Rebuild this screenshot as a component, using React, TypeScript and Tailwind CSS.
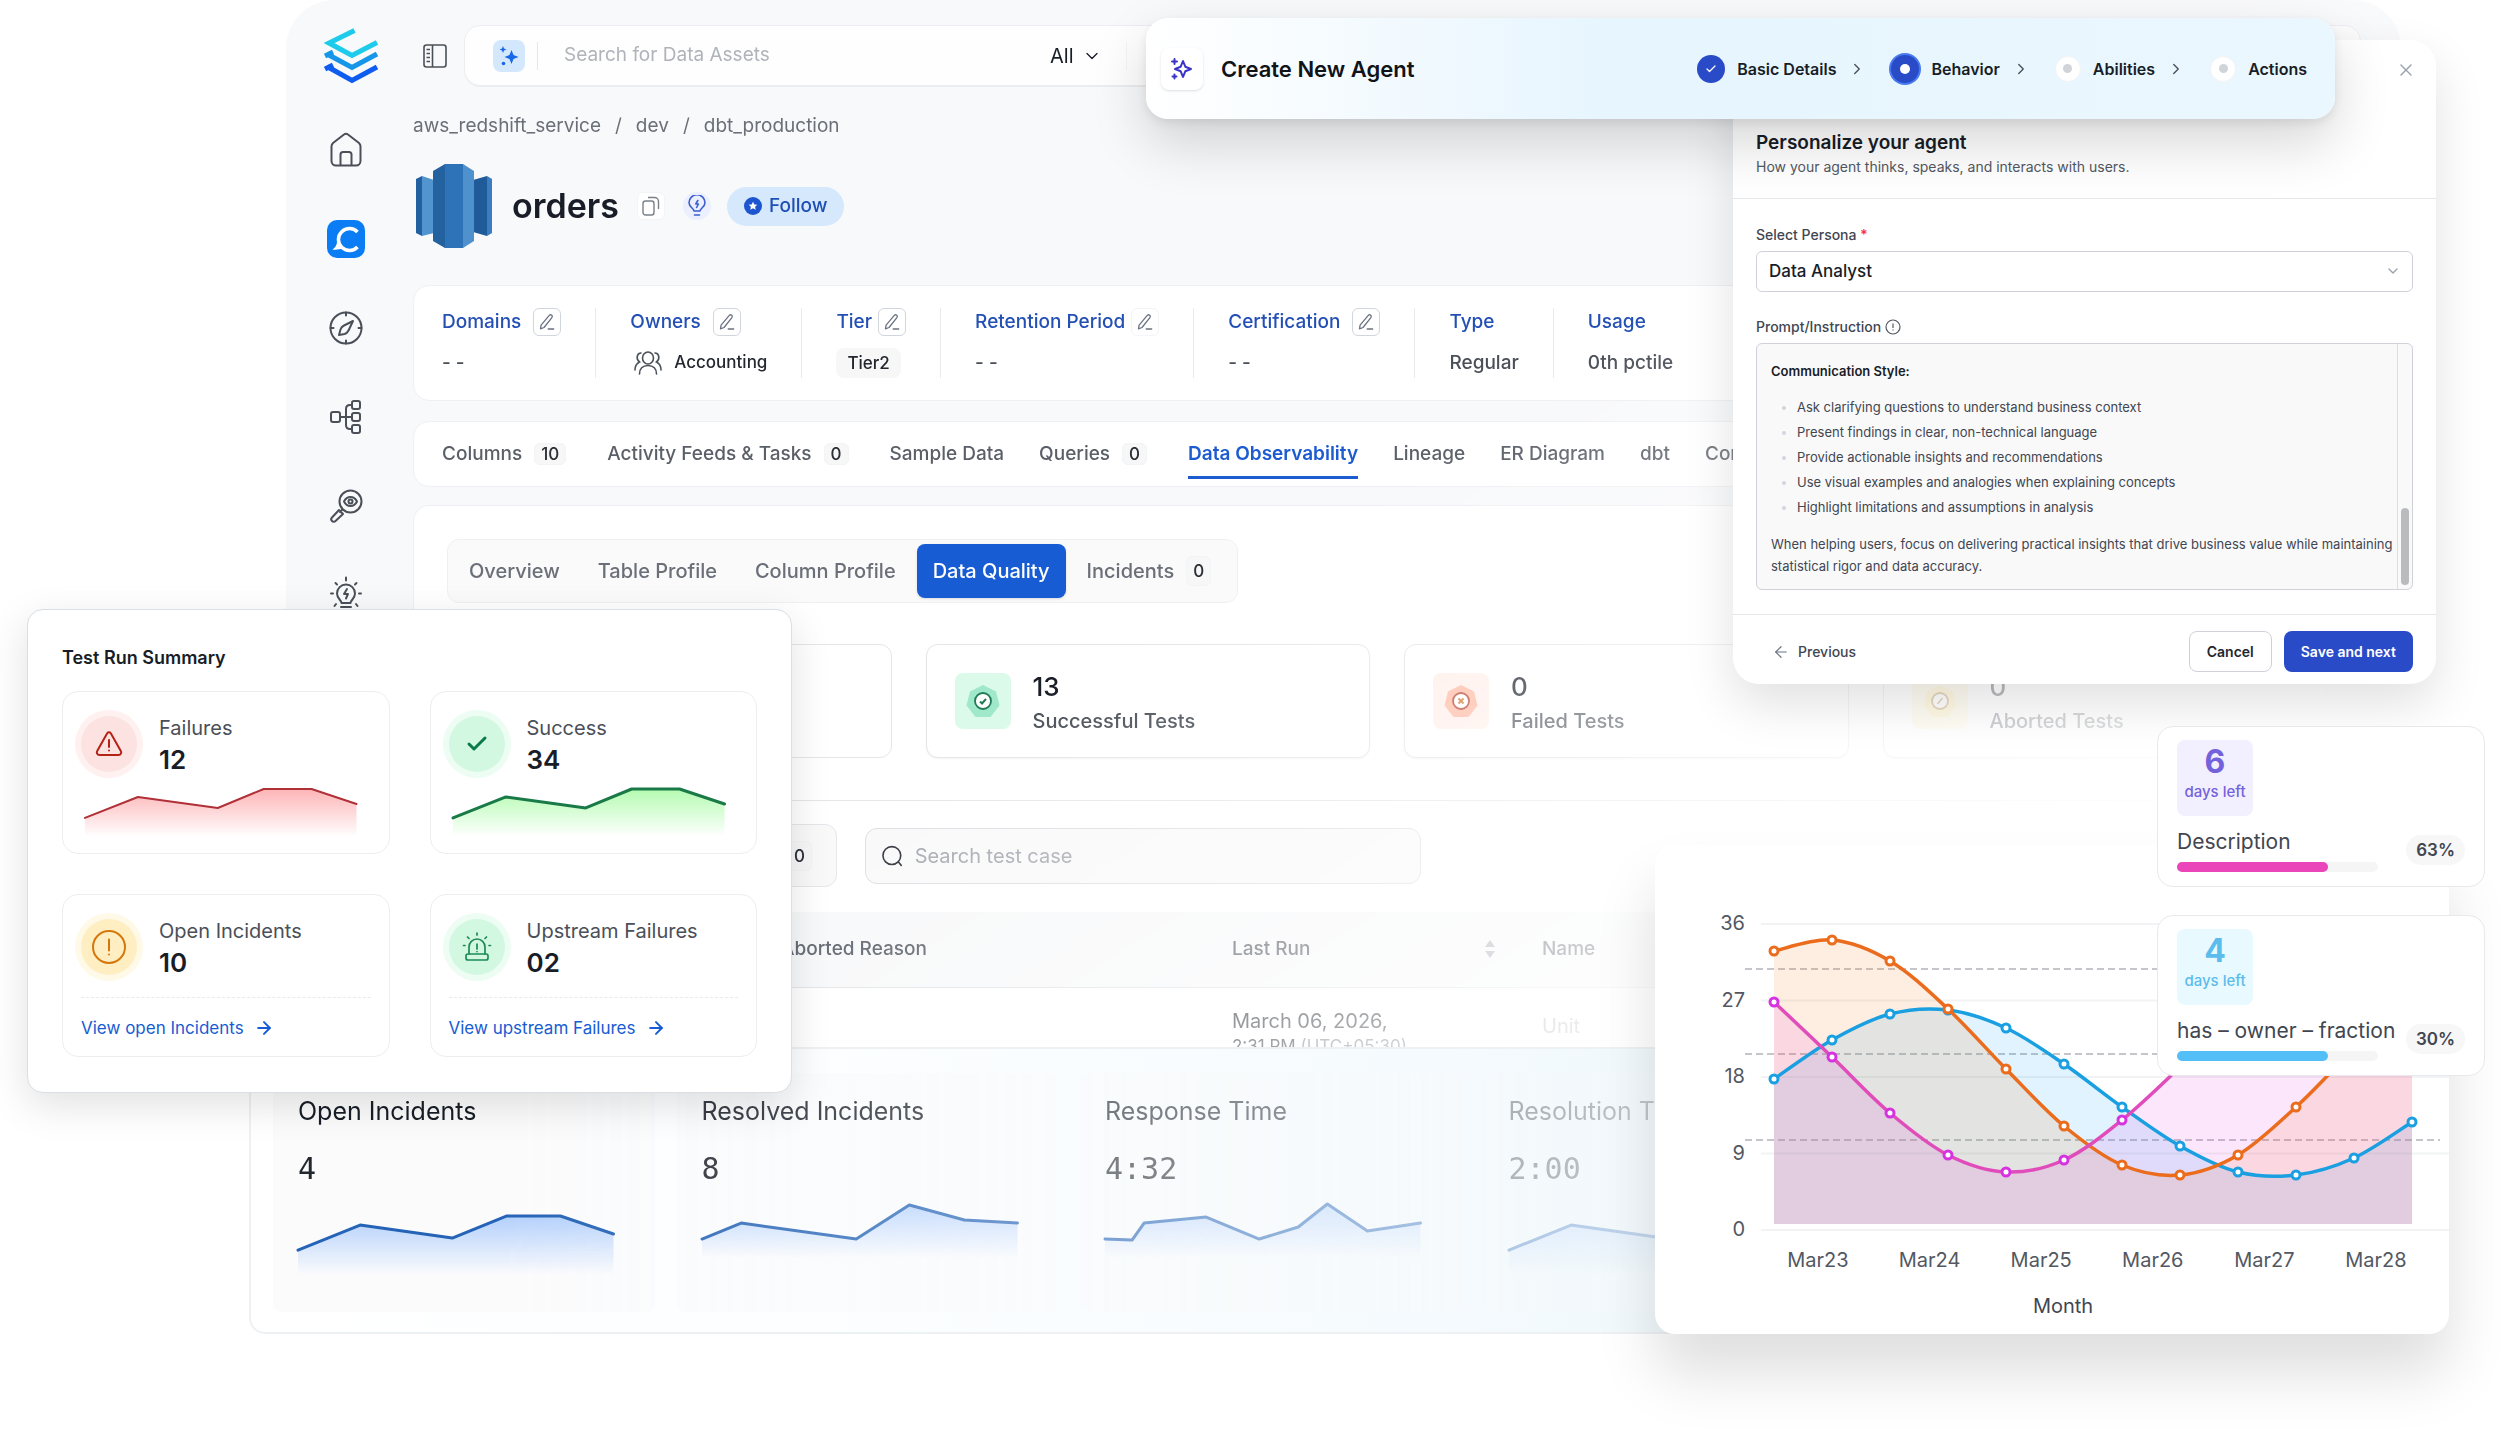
import React from "react";
import { ArrowLeft, ArrowRight, Check, ChevronDown, ChevronRight, X } from "lucide-react";

type Point = [number, number];

const linePath = (points: Point[]) =>
  points.map(([x, y], i) => `${i ? "L" : "M"}${x} ${y}`).join(" ");

// Catmull-Rom spline turned into cubic beziers
const curvePath = (points: Point[]) => {
  let d = `M${points[0][0]} ${points[0][1]}`;
  for (let i = 0; i < points.length - 1; i++) {
    const p0 = points[i - 1] || points[i];
    const p1 = points[i];
    const p2 = points[i + 1];
    const p3 = points[i + 2] || p2;
    d += ` C${p1[0] + (p2[0] - p0[0]) / 6} ${p1[1] + (p2[1] - p0[1]) / 6} ${p2[0] - (p3[0] - p1[0]) / 6} ${p2[1] - (p3[1] - p1[1]) / 6} ${p2[0]} ${p2[1]}`;
  }
  return d;
};

/* ---------- icons ---------- */

const Logo = () => (
  <svg width="56" height="56" viewBox="0 0 56 56" fill="none" strokeWidth="5">
    <path d="M1 41l8-4M3 38.500l25 14 25-13.500" stroke="#0f5cf0" />
    <path d="M1 28l8-4M3 26l25 13.500L53 26" stroke="#1596e8" />
    <path d="M30.500 2.500L5 15l23 12.500L53 14.500" stroke="#1dcbea" />
  </svg>
);

const HomeIcon = () => (
  <svg width="38" height="38" viewBox="0 0 38 38" fill="none" stroke="#4a4f58" strokeWidth="2" strokeLinejoin="round">
    <path d="M4.500 15.500C4.500 14 5 13 6 12L17 3.500c1.200-1 2.800-1 4 0L32 12c1 1 1.500 2 1.500 3.500V30a4.500 4.500 0 0 1-4.500 4.500H9A4.500 4.500 0 0 1 4.500 30z" />
    <path d="M13.500 34V23.500c0-1.500 1-2.500 2.500-2.500h6c1.500 0 2.500 1 2.500 2.500V34" />
  </svg>
);

const ChatLogo = () => (
  <svg width="38" height="38" viewBox="0 0 38 38" fill="none">
    <rect width="38" height="38" rx="10" fill="#0a7df5" />
    <path d="M30.500 12A11 11 0 1 0 30.500 27" stroke="#fff" strokeWidth="3.500" />
    <path d="M10 22c0 3-2 6-4.500 7.500 3.500.5 7 0 10-1z" fill="#fff" />
  </svg>
);

const CompassIcon = () => (
  <svg width="38" height="38" viewBox="0 0 38 38" fill="none" stroke="#4a4f58" strokeWidth="2" strokeLinecap="round" strokeLinejoin="round">
    <circle cx="19" cy="19" r="15.500" />
    <path d="M19 3.500v3M19 31.500v3M3.500 19h3M31.500 19h3" />
    <path d="M26 12l-4.500 9.500c-1 2-2 3-4 3.500L12 26l1.500-5.500c.5-2 1.500-3 3.500-4z" />
  </svg>
);

const LineageIcon = () => (
  <svg width="38" height="38" viewBox="0 0 38 38" fill="none" stroke="#4a4f58" strokeWidth="2">
    <rect x="4" y="14" width="9" height="10" rx="2" />
    <rect x="25" y="3" width="8" height="8" rx="2" />
    <rect x="25" y="15" width="8" height="8" rx="2" />
    <rect x="25" y="27" width="8" height="8" rx="2" />
    <path d="M13 19h12M19 19v-8c0-2.500 1.500-4 4-4h2M19 19v8c0 2.500 1.500 4 4 4h2" />
  </svg>
);

const ObserveIcon = () => (
  <svg width="38" height="38" viewBox="0 0 38 38" fill="none" stroke="#4a4f58" strokeWidth="2" strokeLinecap="round" strokeLinejoin="round">
    <circle cx="23.500" cy="14.500" r="11" />
    <path d="M17 14.500c3-6 10-6 13 0-3 6-10 6-13 0z" />
    <circle cx="23.500" cy="14.500" r="2" />
    <path d="M15.500 22.500L13 25M12 23l4 4-7.500 7c-1 1-2.500 1-3.500 0s-1-2.500 0-3.500z" />
  </svg>
);

const InsightIcon = () => (
  <svg width="38" height="38" viewBox="0 0 38 38" fill="none" stroke="#4a4f58" strokeWidth="2" strokeLinecap="round" strokeLinejoin="round">
    <path d="M14.500 27c0-3-4.500-4-4.500-9.500a9 9 0 0 1 18 0c0 5.500-4.500 6.500-4.500 9.500z" />
    <path d="M14 31h10M15 34.500h8M20 13l-3 5h4l-2 4.500M19 1.500v3M4 17.500h2M32 17.500h2M8.500 7l1.500 1.500M29.500 7L28 8.500M9 28l-1.500 2M29 28l1.500 2" />
  </svg>
);

const RedshiftIcon = () => (
  <svg width="76" height="84" viewBox="0 0 76 84">
    <path d="M0 15l6-3v60l-6-3z" fill="#22609f" />
    <path d="M6 12l12 4v53L6 72z" fill="#5294cf" />
    <path d="M57 16l14-4v60l-14-4z" fill="#205b99" />
    <path d="M71 12l5 3v54l-5 3z" fill="#3b7dc0" />
    <path d="M17 7l12-7v84l-12-7z" fill="#23619f" />
    <path d="M29 0h18v84H29z" fill="#2e73b8" />
    <path d="M47 0l11 7v70l-11 7z" fill="#4f91cd" />
  </svg>
);

const PanelIcon = () => (
  <svg width="24" height="24" viewBox="0 0 24 24" fill="none" stroke="#4a4f58" strokeWidth="1.600">
    <rect x="1" y="1" width="22" height="22" rx="2.500" />
    <path d="M9.500 1v22M3.500 5.500h3.500M3.500 9.500h3.500M3.500 13.500h3.500M3.500 17.500h3.500" />
  </svg>
);

const PencilIcon = () => (
  <svg width="18" height="18" viewBox="0 0 18 18" fill="none" stroke="#6b7280" strokeWidth="1.300" strokeLinecap="round" strokeLinejoin="round">
    <path d="M11.500 2.200c.9-.9 2.300-.2 2.600.4.400.8.200 1.500-.4 2.200L6 14.500l-3.500 1.300.6-3.700zM10.200 16h5.500" />
  </svg>
);

const SparkleIcon = () => (
  <svg width="20" height="22" viewBox="0 0 20 22" fill="#1767e8">
    <path d="M12.500 5l2 5 5 2-5 2-2 5-2-5-5-2 5-2z" />
    <path d="M4 1l1 2.500L7.500 4.500 5 5.500 4 8 3 5.500.5 4.500 3 3.500z" />
    <circle cx="4.500" cy="18.500" r="1.800" />
  </svg>
);

const AgentIcon = () => (
  <svg width="24" height="24" viewBox="0 0 24 24" fill="none" stroke="#3a33c8" strokeWidth="2" strokeLinejoin="round" strokeLinecap="round">
    <path d="M13 4l2.300 5.700L21 12l-5.700 2.300L13 20l-2.300-5.700L5 12l5.700-2.300z" />
    <path d="M4.500 2v5M2 4.500h5M4.500 17.500v4M2.500 19.500h4" />
  </svg>
);

const CopyIcon = () => (
  <svg width="18" height="20" viewBox="0 0 18 20" fill="none" stroke="#7a7f88" strokeWidth="1.400">
    <rect x="1" y="5" width="11" height="14" rx="2.500" />
    <path d="M6 1.500h6.500a4 4 0 0 1 4 4V13" />
  </svg>
);

const BulbIcon = () => (
  <svg width="20" height="22" viewBox="0 0 20 22" fill="none" stroke="#3b5fd0" strokeWidth="1.600" strokeLinecap="round" strokeLinejoin="round">
    <path d="M7 16c0-2.500-5-4-5-8.200a8 8 0 0 1 16 0C18 12 13 13.500 13 16z" />
    <path d="M7.500 20h5M10.800 5.500L8.800 9h2.600l-1.800 3.500" />
  </svg>
);

const FollowIcon = () => (
  <svg width="18" height="18" viewBox="0 0 18 18">
    <circle cx="9" cy="9" r="9" fill="#1d55cf" />
    <path d="M9 4.800l1.300 2.700 3 .3-2.200 2 .6 3L9 11.300l-2.700 1.500.6-3-2.200-2 3-.3z" fill="#fff" />
  </svg>
);

const PeopleIcon = () => (
  <svg width="28" height="24" viewBox="0 0 28 24" fill="none" stroke="#4a4f58" strokeWidth="1.600" strokeLinecap="round">
    <ellipse cx="14" cy="7" rx="5.500" ry="6" />
    <path d="M5.500 23c0-5 3-8.500 8.500-8.500s8.500 3.500 8.500 8.500M7 2C3 2 1.500 8 5.500 11 2.500 12.500 1 15.500 1 19M21 2c4 0 5.500 6 1.500 9 3 1.500 4.500 4.500 4.500 8" />
  </svg>
);

const SearchIcon = () => (
  <svg width="22" height="22" viewBox="0 0 22 22" fill="none" stroke="#2b2f36" strokeWidth="1.700" strokeLinecap="round">
    <circle cx="10.500" cy="10.500" r="9.500" />
    <path d="M17.500 17.500l3 3.500" />
  </svg>
);

const ShieldTile: React.FC<{ tone: "green" | "red" | "yellow" }> = ({ tone }) => {
  const colors = {
    green: ["#dcfaea", "#9fe8c9", "#1f7a55"],
    red: ["#ffefea", "#ffb9a3", "#b5452f"],
    yellow: ["#fff7dc", "#ffedb0", "#b98a3c"],
  }[tone];
  return (
    <svg width="56" height="56" viewBox="0 0 56 56" fill="none">
      <rect width="56" height="56" rx="8" fill={colors[0]} />
      <path d="M28 12l13 6.500 3.500 14-9 11.500h-15l-9-11.500L15 18.500z" fill={colors[1]} />
      <circle cx="28" cy="28" r="8" fill="#fff" stroke={colors[2]} strokeWidth="1.800" />
      {tone === "green" && <path d="M25 28.500l2 2 4-4.500" stroke={colors[2]} strokeWidth="2" />}
      {tone === "red" && <path d="M25.500 25.500l5 5M30.500 25.500l-5 5" stroke="#d0782f" strokeWidth="2" />}
      {tone === "yellow" && <path d="M25.500 31l5-6" stroke={colors[2]} strokeWidth="1.600" />}
    </svg>
  );
};

/* ---------- shared bits ---------- */

const EditButton: React.FC<{ label: string; faint?: boolean }> = ({ label, faint }) => (
  <button
    aria-label={`Edit ${label}`}
    className={`flex size-7 items-center justify-center rounded-md border bg-white ${faint ? "border-gray-100" : "border-gray-300"}`}
  >
    <PencilIcon />
  </button>
);

const Count: React.FC<{ value: number }> = ({ value }) => (
  <span className="rounded-md border border-gray-100 bg-[#f7f7f8] px-[6px] text-[17px] leading-7 font-medium text-[#2b2f36]">
    {value}
  </span>
);

const Sparkline: React.FC<{
  id: string;
  points: Point[];
  base: number;
  stroke: string;
  fill: string;
  width?: number;
}> = ({ id, points, base, stroke, fill, width = 3 }) => {
  const last = points[points.length - 1][0];
  return (
    <svg viewBox={`0 0 ${last + 4} ${base}`} className="block w-full overflow-visible" fill="none">
      <defs>
        <linearGradient id={id} x1="0" y1="0" x2="0" y2="1">
          <stop offset="0" stopColor={fill} />
          <stop offset="1" stopColor={fill} stopOpacity="0" />
        </linearGradient>
      </defs>
      <path d={`${linePath(points)} V${base} H${points[0][0]}Z`} fill={`url(#${id})`} />
      <path d={linePath(points)} stroke={stroke} strokeWidth={width} strokeLinecap="round" strokeLinejoin="round" />
    </svg>
  );
};

/* ---------- main window ---------- */

const navItems = [
  { label: "Home", icon: <HomeIcon /> },
  { label: "Assistant", icon: <ChatLogo /> },
  { label: "Explore", icon: <CompassIcon /> },
  { label: "Lineage", icon: <LineageIcon /> },
  { label: "Observability", icon: <ObserveIcon /> },
  { label: "Insights", icon: <InsightIcon /> },
];

const Sidebar = () => (
  <aside className="w-[127px] shrink-0 pt-7">
    <div className="flex justify-center pl-1">
      <Logo />
    </div>
    <nav className="mt-[47px] flex flex-col items-center gap-[51px] pr-2">
      {navItems.map((item) => (
        <a key={item.label} href="#" aria-label={item.label}>
          {item.icon}
        </a>
      ))}
    </nav>
  </aside>
);

const metaItems: { title: string; value: React.ReactNode; edit?: boolean; tight?: boolean }[] = [
  { title: "Domains", value: "- -", edit: true },
  {
    title: "Owners",
    edit: true,
    value: (
      <span className="flex items-center gap-3 pl-1 text-[17px] font-medium text-[#23272e]">
        <PeopleIcon />
        Accounting
      </span>
    ),
  },
  {
    title: "Tier",
    edit: true,
    tight: true,
    value: (
      <span className="rounded-lg bg-[#f7f7f8] px-[11px] text-[17px] leading-[30px] font-medium text-[#23272e]">Tier2</span>
    ),
  },
  { title: "Retention Period", value: "- -", edit: true, tight: true },
  { title: "Certification", value: "- -", edit: true },
  { title: "Type", value: "Regular" },
  { title: "Usage", value: "0th pctile" },
];

const MetaCard = () => (
  <section className="mt-[37px] rounded-2xl border border-[#eef0f3] bg-white py-[22px]">
    <dl className="flex divide-x divide-[#e9eaee] pl-7">
      {metaItems.map((item) => (
        <div key={item.title} className="px-[34px] whitespace-nowrap first:pl-0">
          <dt className={`flex h-7 items-center text-[19px] font-medium text-[#2450b5] ${item.tight ? "gap-[6px]" : "gap-3"}`}>
            {item.title}
            {item.edit && <EditButton label={item.title} faint={item.title === "Retention Period"} />}
          </dt>
          <dd className="mt-3 flex h-[30px] items-center text-[19px] font-medium text-[#4a4f58]">{item.value}</dd>
        </div>
      ))}
    </dl>
  </section>
);

const tabs: { label: string; count?: number }[] = [
  { label: "Columns", count: 10 },
  { label: "Activity Feeds & Tasks", count: 0 },
  { label: "Sample Data" },
  { label: "Queries", count: 0 },
  { label: "Data Observability" },
  { label: "Lineage" },
  { label: "ER Diagram" },
  { label: "dbt" },
  { label: "Contract" },
];

const TabsCard = () => (
  <nav className="mt-5 flex h-[66px] items-center gap-[35px] rounded-2xl border border-[#eef0f3] bg-white px-7">
    {tabs.map((tab) => (
      <a
        key={tab.label}
        href="#"
        className={
          tab.label === "Data Observability"
            ? "mt-[7px] border-b-3 border-[#1d5bd0] pb-1 text-[19px] leading-9 font-semibold whitespace-nowrap text-[#1d5bd0]"
            : "flex items-center gap-3 text-[19px] font-medium whitespace-nowrap text-[#5a5f68]"
        }
      >
        {tab.label}
        {tab.count !== undefined && (
          <span className="mr-[6px]">
            <Count value={tab.count} />
          </span>
        )}
      </a>
    ))}
  </nav>
);

const SubTabs = () => (
  <div className="flex w-fit items-center gap-1 rounded-xl border border-[#eef0f2] bg-[#fafafa] p-1 text-xl font-medium text-[#6a6f78]">
    <button className="h-[54px] rounded-lg px-[17px]">Overview</button>
    <button className="h-[54px] rounded-lg px-[17px]">Table Profile</button>
    <button className="h-[54px] rounded-lg px-[17px]">Column Profile</button>
    <button className="h-[54px] rounded-lg bg-[#175cd3] px-4 text-white shadow-sm">Data Quality</button>
    <button className="flex h-[54px] items-center gap-3 rounded-lg pr-[22px] pl-[17px]">
      Incidents
      <Count value={0} />
    </button>
  </div>
);

const StatCard: React.FC<{ tone: "green" | "red" | "yellow"; value: number; label: string }> = ({ tone, value, label }) => (
  <div className="flex h-[114px] items-center gap-[22px] rounded-xl border border-[#e4e6ea] bg-white px-7 shadow-xs">
    <ShieldTile tone={tone} />
    <div className="pt-[3px]">
      <p className="text-[26px] leading-9 font-medium text-[#181d27]">{value}</p>
      <p className="text-xl leading-8 font-medium text-[#4a4f58]">{label}</p>
    </div>
  </div>
);

const QualityCard = () => (
  <section className="mt-[18px] rounded-t-2xl border border-b-0 border-[#eef0f3] bg-white pt-[33px]">
    <div className="px-[33px]">
      <SubTabs />
      <div className="mt-[41px] grid grid-cols-4 gap-[34px]">
        <div className="rounded-xl border border-[#e4e6ea]" />
        <StatCard tone="green" value={13} label="Successful Tests" />
        <StatCard tone="red" value={0} label="Failed Tests" />
        <StatCard tone="yellow" value={0} label="Aborted Tests" />
      </div>
    </div>
    <hr className="mt-[42px] border-[#e4e6ea]" />
    <div className="px-[33px] pt-[23px]">
      <div className="flex items-center gap-7">
        <div className="flex h-[63px] w-[390px] items-center justify-end rounded-xl border border-[#e4e6ea] bg-[#f9f9fa] px-6">
          <Count value={0} />
        </div>
        <label className="flex h-14 w-[556px] items-center gap-3 rounded-xl border border-[#dcdee3] bg-[#f9f9fa] px-4">
          <SearchIcon />
          <input
            aria-label="Search test case"
            placeholder="Search test case"
            className="w-full bg-transparent text-xl outline-none placeholder:text-[#a4a7ae]"
          />
        </label>
      </div>
      <div className="mt-[25px] h-[135px] overflow-hidden">
        <table className="w-full table-fixed text-left text-xl text-[#535862]">
          <thead>
            <tr className="h-[75px] border-b border-[#dfe1e6] bg-[#f7f8f9]">
              <th className="w-[317px] px-[17px]" />
              <th className="w-[451px] px-[17px] text-[19px] font-medium">Aborted Reason</th>
              <th className="w-[310px] px-[17px] text-[19px] font-medium">
                <span className="flex items-center justify-between pr-3">
                  Last Run
                  <svg width="12" height="18" viewBox="0 0 12 18" fill="#a4a7ae">
                    <path d="M6 0l5 7H1zM6 18l5-7H1z" />
                  </svg>
                </span>
              </th>
              <th className="px-[17px] text-[19px] font-medium">Name</th>
            </tr>
          </thead>
          <tbody>
            <tr className="align-top leading-6">
              <td />
              <td />
              <td className="px-[17px] pt-[21px] text-[#23272e]">
                March 06, 2026,
                <br />
                <span className="text-[17px]">
                  2:31 PM <span className="text-[#717680]">(UTC+05:30)</span>
                </span>
              </td>
              <td className="px-[17px] pt-[26px] text-[#a4a7ae]">Unit</td>
            </tr>
          </tbody>
        </table>
      </div>
    </div>
  </section>
);

const MainWindow = () => (
  <main className="mr-[100px] ml-[286px] flex overflow-hidden rounded-t-[48px] bg-[#f8f9fb] [mask-image:linear-gradient(148deg,black_987px,transparent_1720px)]">
    <Sidebar />
    <div className="min-w-0 flex-1 pt-[25px] pr-10">
      <header className="flex items-center gap-[17px] pl-[10px]">
        <button aria-label="Toggle sidebar">
          <PanelIcon />
        </button>
        <div className="flex h-[61px] flex-1 items-center rounded-2xl border border-[#ebedf0] bg-white/80 pl-7 shadow-2xs">
          <button aria-label="Ask AI" className="flex size-8 items-center justify-center rounded-lg bg-[#d3e8fd]">
            <SparkleIcon />
          </button>
          <div className="ml-3 h-7 w-px bg-gray-200" />
          <input
            aria-label="Search for Data Assets"
            placeholder="Search for Data Assets"
            className="ml-[26px] w-[486px] bg-transparent text-[19px] outline-none placeholder:text-[#b0b3ba]"
          />
          <button className="flex items-center gap-2 text-xl text-[#181d27]">
            All <ChevronDown size={20} strokeWidth={1.6} />
          </button>
          <div className="ml-6 h-7 w-px bg-gray-100" />
        </div>
      </header>

      <div className="mt-[26px] flex gap-[14px] text-[19px] leading-7 text-[#6a6f78]">
        <a href="#">aws_redshift_service</a>
        <span>/</span>
        <a href="#">dev</a>
        <span>/</span>
        <a href="#">dbt_production</a>
      </div>

      <div className="mt-6 flex items-center pl-[3px]">
        <RedshiftIcon />
        <h1 className="ml-5 text-[34px] leading-10 font-semibold text-[#181d27]">orders</h1>
        <button aria-label="Copy name" className="ml-[18px] flex size-7 items-center justify-center rounded-md border border-gray-100 bg-white">
          <CopyIcon />
        </button>
        <button aria-label="Suggestions" className="ml-[18px] flex size-7 items-center justify-center rounded-full bg-[#eceffe]">
          <BulbIcon />
        </button>
        <button className="ml-4 flex h-[39px] items-center gap-[7px] rounded-full bg-[#d6e8fc] px-[17px] text-[19px] font-medium text-[#1f4fb5]">
          <FollowIcon />
          Follow
        </button>
      </div>

      <MetaCard />
      <TabsCard />
      <QualityCard />
    </div>
  </main>
);

/* ---------- incident metrics strip ---------- */

const risePoints: Point[] = [[0, 47], [62, 22], [154, 35], [208, 13], [262, 13], [315, 31]];

const metrics: { title: string; value: string; points: Point[]; base: number }[] = [
  { title: "Open Incidents", value: "4", points: risePoints, base: 72 },
  {
    title: "Resolved Incidents",
    value: "8",
    points: [[0, 36], [39, 20], [154, 36], [207, 2], [262, 17], [315, 20]],
    base: 55,
  },
  {
    title: "Response Time",
    value: "4:32",
    points: [[0, 36], [27, 37], [39, 20], [101, 14], [154, 36], [193, 24], [222, 1], [262, 28], [315, 20]],
    base: 55,
  },
  { title: "Resolution Time", value: "2:00", points: risePoints, base: 72 },
];

const MetricsStrip = () => (
  <section className="mr-[612px] ml-[249px] rounded-b-2xl border-2 border-[#eef1f4] bg-linear-to-r from-white via-[#fafdff] via-50% to-[#eef7fb]">
    <div className="grid grid-cols-4 gap-[22px] px-[22px] pt-6 pb-5 [mask-image:linear-gradient(to_right,black_250px,transparent_1750px)]">
      {metrics.map((metric, i) => (
        <article key={metric.title} className="h-[239px] rounded-lg bg-[#f9f9fb]/70 py-5 pr-[37px] pl-[25px]">
          <h2 className="text-[25px] leading-9 font-normal whitespace-nowrap text-[#181d27]">{metric.title}</h2>
          <p className="mt-5 mb-[14px] font-['DejaVu_Sans_Mono',monospace] text-[30px] leading-10 text-[#23272e]">{metric.value}</p>
          <Sparkline id={`metric-${i}`} points={metric.points} base={metric.base} stroke="#2463b5" fill="#b3d0fc" />
        </article>
      ))}
    </div>
  </section>
);

/* ---------- test run summary ---------- */

const trendPoints: Point[] = [[0, 31], [53, 10], [133, 21], [179, 2], [227, 2], [272, 17]];

const RunCard: React.FC<{
  title: string;
  value: string;
  icon: React.ReactNode;
  halo: string;
  children: React.ReactNode;
}> = ({ title, value, icon, halo, children }) => (
  <article className="h-[163px] rounded-2xl border border-[#eceef1] bg-white px-[18px] pt-5">
    <div className="flex items-center gap-[22px]">
      <span className={`flex size-[56px] items-center justify-center rounded-full ring-6 ${halo}`}>{icon}</span>
      <div>
        <h3 className="text-xl leading-8 font-normal whitespace-nowrap text-[#4a4f58]">{title}</h3>
        <p className="text-[26px] leading-8 font-semibold text-[#181d27]">{value}</p>
      </div>
    </div>
    {children}
  </article>
);

const RunLink: React.FC<{ children: React.ReactNode }> = ({ children }) => (
  <div className="mt-[18px] border-t border-dashed border-[#e9eaed] pt-4">
    <a href="#" className="flex items-center gap-[10px] text-[17px] leading-7 text-[#175cd3]">
      {children}
      <ArrowRight size={20} strokeWidth={2.4} />
    </a>
  </div>
);

const TestRunSummary = () => (
  <section className="absolute top-[609px] left-[27px] w-[765px] rounded-2xl border border-[#d9dfe4] bg-white px-[34px] pt-8 pb-[35px] shadow-[0_12px_40px_rgba(0,0,0,0.12)]">
    <h2 className="text-lg leading-8 font-semibold text-[#181d27]">Test Run Summary</h2>
    <div className="mt-[17px] grid grid-cols-2 gap-10">
      <RunCard
        title="Failures"
        value="12"
        halo="bg-[#fce2e0] ring-[#fef1f0]"
        icon={
          <svg width="28" height="26" viewBox="0 0 28 26" fill="none" stroke="#b42318" strokeWidth="2" strokeLinecap="round" strokeLinejoin="round">
            <path d="M12.200 2.200c.9-1.300 2.700-1.300 3.600 0l10 17.800c.9 1.600.2 4-2.300 4h-19c-2.500 0-3.200-2.400-2.300-4zM14 9v7M14 19.500v.1" />
          </svg>
        }
      >
        <div className="mt-[11px] pr-[10px] pl-1">
          <Sparkline id="failures" points={trendPoints} base={50} stroke="#b03038" fill="#fdb4b6" width={2} />
        </div>
      </RunCard>
      <RunCard
        title="Success"
        value="34"
        halo="bg-[#d3f8e1] ring-[#edfdf3]"
        icon={<Check size={24} strokeWidth={3} color="#0b7a4b" />}
      >
        <div className="mt-[11px] pr-[10px] pl-1">
          <Sparkline id="success" points={trendPoints} base={50} stroke="#1a7a47" fill="#b4fbb0" width={3} />
        </div>
      </RunCard>
      <RunCard
        title="Open Incidents"
        value="10"
        halo="bg-[#feeec2] ring-[#fff9e8]"
        icon={
          <svg width="34" height="34" viewBox="0 0 34 34" fill="none" stroke="#d4780c" strokeWidth="2" strokeLinecap="round">
            <circle cx="17" cy="17" r="16" />
            <path d="M17 9.500v11M17 24.500v.1" />
          </svg>
        }
      >
        <RunLink>View open Incidents</RunLink>
      </RunCard>
      <RunCard
        title="Upstream Failures"
        value="02"
        halo="bg-[#d3f8e1] ring-[#edfdf3]"
        icon={
          <svg width="30" height="30" viewBox="0 0 30 30" fill="none" stroke="#1c8a58" strokeWidth="1.700" strokeLinecap="round" strokeLinejoin="round">
            <rect x="4" y="22" width="22" height="6" rx="2" />
            <path d="M7 22v-7a8 8 0 0 1 16 0v7M15 12v5M15 19.500v.1M15 1v2M5.500 5L7 6.500M24.500 5L23 6.500M1.500 13.500h1.500M27 13.500h1.500" />
          </svg>
        }
      >
        <RunLink>View upstream Failures</RunLink>
      </RunCard>
    </div>
  </section>
);

/* ---------- agent wizard ---------- */

const steps: { label: string; state: "done" | "active" | "todo" }[] = [
  { label: "Basic Details", state: "done" },
  { label: "Behavior", state: "active" },
  { label: "Abilities", state: "todo" },
  { label: "Actions", state: "todo" },
];

const StepDot: React.FC<{ state: "done" | "active" | "todo" }> = ({ state }) => {
  if (state === "done") {
    return (
      <span className="flex size-7 items-center justify-center rounded-full bg-[#2a4bc8] text-white">
        <Check size={12} strokeWidth={2.5} />
      </span>
    );
  }
  if (state === "active") {
    return (
      <span className="flex size-7 items-center justify-center rounded-full bg-[#2a4bc8] ring-2 ring-[#4a7af0]">
        <span className="size-[10px] rounded-full bg-white" />
      </span>
    );
  }
  return (
    <span className="flex size-[26px] items-center justify-center rounded-full border border-gray-100 bg-white">
      <span className="size-[9px] rounded-full bg-[#d0d3d8]" />
    </span>
  );
};

const AgentBar = () => (
  <header className="absolute top-[18px] right-[166px] left-[1146px] flex h-[101px] items-center rounded-[22px] bg-linear-to-r from-white via-[#e6f5fe] via-40% to-[#ebf7fe] pr-7 pl-[15px] shadow-[0_24px_56px_rgba(0,0,0,0.16),0_4px_10px_rgba(0,0,0,0.08)]">
    <span className="flex size-[42px] items-center justify-center rounded-lg bg-white shadow-sm">
      <AgentIcon />
    </span>
    <h2 className="ml-[18px] pt-[2px] text-[22px] font-semibold text-[#101318]">Create New Agent</h2>
    <ol className="ml-auto flex items-center">
      {steps.map((step, i) => (
        <li key={step.label} className="flex items-center">
          <StepDot state={step.state} />
          <span className="ml-3 text-base font-semibold text-[#181d27]">{step.label}</span>
          {i < steps.length - 1 && <ChevronRight size={18} strokeWidth={1.8} className="mr-[25px] ml-3 text-[#4a4f58]" />}
        </li>
      ))}
    </ol>
  </header>
);

const styleRules = [
  "Ask clarifying questions to understand business context",
  "Present findings in clear, non-technical language",
  "Provide actionable insights and recommendations",
  "Use visual examples and analogies when explaining concepts",
  "Highlight limitations and assumptions in analysis",
];

const PersonaModal = () => (
  <section className="absolute top-10 right-[65px] w-[703px] rounded-[26px] bg-white shadow-[0_20px_50px_rgba(0,0,0,0.12)]">
    <button aria-label="Close" className="absolute top-5 right-5 text-gray-400">
      <X size={20} strokeWidth={1.6} />
    </button>
    <div className="border-b border-[#e4e6ea] px-[23px] pt-[90px] pb-5">
      <h2 className="text-[19px] leading-[26px] font-semibold text-[#181d27]">Personalize your agent</h2>
      <p className="text-sm leading-[22px] text-[#535862]">How your agent thinks, speaks, and interacts with users.</p>
    </div>
    <div className="px-[23px] pt-[26px] pb-6">
      <label htmlFor="persona" className="block text-sm leading-5 font-medium text-[#414651]">
        Select Persona <span className="text-red-500">*</span>
      </label>
      <div className="relative mt-[6px]">
        <select
          id="persona"
          className="h-[41px] w-full appearance-none rounded-md border border-[#cfd2d8] bg-white px-3 text-[17px] font-medium text-[#181d27]"
        >
          <option>Data Analyst</option>
        </select>
        <ChevronDown size={16} className="pointer-events-none absolute top-3 right-3 text-gray-400" />
      </div>
      <h3 className="mt-[25px] flex items-center gap-1 text-sm leading-5 font-medium text-[#414651]">
        Prompt/Instruction
        <svg width="16" height="16" viewBox="0 0 16 16" fill="none" stroke="#535862" strokeWidth="1.200">
          <circle cx="8" cy="8" r="7" />
          <path d="M8 4.500v4.500M8 10.500v1" />
        </svg>
      </h3>
      <div className="mt-[6px] flex rounded-md border border-[#cfd2d8] bg-[#f9f9f9]">
        <div className="flex-1 pt-4 pb-3 pr-1 pl-[14px] text-[13px] leading-[22px] text-[#414651]">
          <h4 className="font-semibold text-[#181d27]">Communication Style:</h4>
          <ul className="mt-[13px] ml-[26px] list-disc leading-[25px] marker:text-gray-300">
            {styleRules.map((rule) => (
              <li key={rule}>{rule}</li>
            ))}
          </ul>
          <p className="mt-[13px]">
            When helping users, focus on delivering practical insights that drive business value while maintaining
            statistical rigor and data accuracy.
          </p>
        </div>
        <div className="flex w-[15px] items-end justify-center border-l border-[#dcdee3] pb-1">
          <div className="h-[77px] w-2 rounded-full bg-[#b9bbbf]" />
        </div>
      </div>
    </div>
    <footer className="flex items-center border-t border-[#e4e6ea] px-[23px] pt-4 pb-3">
      <button className="mr-auto flex items-center gap-2 pl-4 text-sm font-medium text-[#414651]">
        <ArrowLeft size={18} strokeWidth={1.6} className="text-gray-500" />
        Previous
      </button>
      <button className="h-[41px] rounded-lg border border-[#cfd2d8] px-[17px] text-sm font-semibold text-[#23272e]">Cancel</button>
      <button className="ml-3 h-[41px] rounded-lg bg-[#2a4bc8] px-[17px] text-sm font-semibold text-white">Save and next</button>
    </footer>
  </section>
);

/* ---------- month chart ---------- */

const series = [
  { stroke: "#1a9fe0", dot: "#1a9fe0", fill: "#0ea5f5", values: [234, 195, 169, 165, 183, 219, 262, 301, 327, 330, 313, 277] },
  { stroke: "#ea6c1c", dot: "#ea6c1c", fill: "#fb7a1e", values: [106, 95, 116, 164, 224, 281, 320, 330, 310, 262, 205, 160] },
  { stroke: "#e04dbb", dot: "#d633e0", fill: "#e03ae0", values: [157, 212, 268, 310, 327, 315, 275, 222, 165, 120, 100, 96] },
];

const toPoints = (values: number[]): Point[] => values.map((y, i) => [119 + i * 58, y]);

const MonthChart = () => (
  <section className="absolute top-[845px] right-[52px] w-[794px] rounded-[20px] bg-white shadow-[0_40px_60px_rgba(0,0,0,0.13)]">
    <svg viewBox="0 0 794 489" className="block w-full font-['Inter',sans-serif]" fontSize="20" fill="#535862">
      {[36, 27, 18, 9, 0].map((value, i) => (
        <g key={value}>
          <line x1="106" x2="794" y1={79 + i * 76.5} y2={79 + i * 76.5} stroke="#f2f3f4" strokeWidth="2" />
          <text x="90" y={85 + i * 76.5} textAnchor="end">
            {value}
          </text>
        </g>
      ))}
      {[124, 209, 295].map((y) => (
        <line key={y} x1="90" x2="785" y1={y} y2={y} stroke="#c4c6ca" strokeWidth="2" strokeDasharray="7 4" />
      ))}
      {series.map((s) => (
        <path key={s.stroke} d={`${curvePath(toPoints(s.values))} V379 H119Z`} fill={s.fill} fillOpacity=".13" />
      ))}
      {series.map((s) => (
        <g key={s.stroke} fill="none">
          <path d={curvePath(toPoints(s.values))} stroke={s.stroke} strokeWidth="3.500" />
          {toPoints(s.values).map(([x, y]) => (
            <circle key={x} cx={x} cy={y} r="4" fill="#fff" stroke={s.dot} strokeWidth="3" />
          ))}
        </g>
      ))}
      {["Mar23", "Mar24", "Mar25", "Mar26", "Mar27", "Mar28"].map((month, i) => (
        <text key={month} x={163 + i * 111.6} y="422" textAnchor="middle">
          {month}
        </text>
      ))}
      <text x="408" y="468" textAnchor="middle" fill="#414651">
        Month
      </text>
    </svg>
  </section>
);

/* ---------- progress cards ---------- */

const ProgressCard: React.FC<{
  days: number;
  label: string;
  percent: number;
  tile: string;
  bar: string;
}> = ({ days, label, percent, tile, bar }) => (
  <article className="rounded-2xl border border-[#e7e9ec] bg-white px-[19px] pt-[13px] pb-[14px]">
    <div className={`flex size-[76px] flex-col items-center rounded-lg pt-1 ${tile}`}>
      <span className="text-[32px] leading-9 font-bold">{days}</span>
      <span className="text-[15px] leading-6 font-medium">days left</span>
    </div>
    <div className="mt-3 flex items-center justify-between">
      <div>
        <p className="text-[21px] leading-7 whitespace-nowrap text-[#414651]">{label}</p>
        <div className="mt-[6px] h-[10px] w-[201px] rounded-full bg-[#f5f5f6]">
          <div className={`h-full w-3/4 rounded-full ${bar}`} />
        </div>
      </div>
      <span className="rounded-full bg-[#f7f7f8] px-[10px] text-[17px] leading-[30px] font-semibold text-[#414651]">{percent}%</span>
    </div>
  </article>
);

export default function App() {
  return (
    <div className="relative min-h-screen w-full overflow-hidden bg-white font-['Inter',sans-serif]">
      <MainWindow />
      <MetricsStrip />
      <TestRunSummary />
      <PersonaModal />
      <AgentBar />
      <MonthChart />
      <div className="absolute top-[726px] right-4 flex w-[328px] flex-col gap-7">
        <ProgressCard days={6} label="Description" percent={63} tile="bg-[#f2f0fe] text-[#7462dc]" bar="bg-[#ea45b9]" />
        <ProgressCard days={4} label="has – owner – fraction" percent={30} tile="bg-[#e8faff] text-[#5cbcec]" bar="bg-[#54bff6]" />
      </div>
    </div>
  );
}
